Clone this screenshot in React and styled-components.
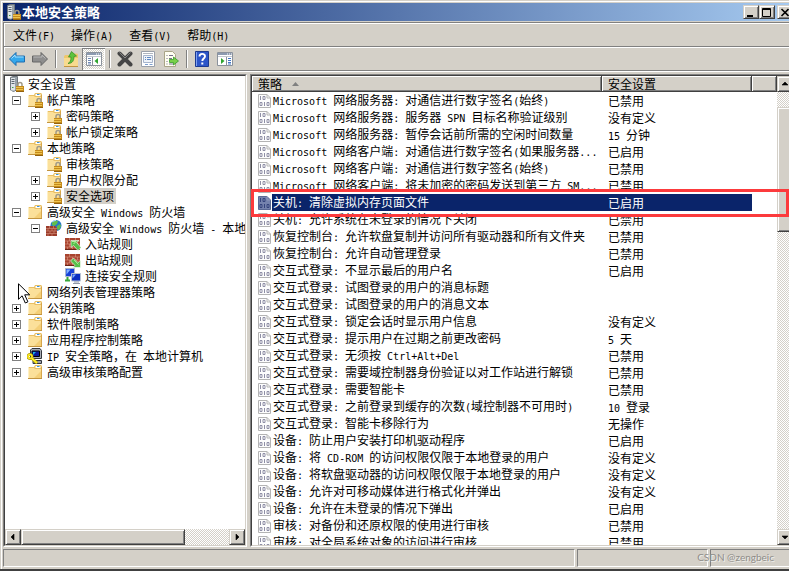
import React from "react";
import styled, { createGlobalStyle, css } from "styled-components";

const face = "#d4d0c8";
const shade = "#808080";
const dark = "#404040";
const navy = "#0a246a";

const Global = createGlobalStyle`
  * { box-sizing: border-box; }
  body { margin: 0; background: ${face}; }
  button { font: inherit; color: inherit; padding: 0; border: 0; background: none; }
`;

const raised = css`
  background: ${face};
  border: 1px solid;
  border-color: ${face} ${dark} ${dark} ${face};
  box-shadow: inset 1px 1px 0 #fff, inset -1px -1px 0 ${shade};
`;

const dither = css`
  background: repeating-conic-gradient(${face} 0% 25%, #fff 0% 50%) 0 0 / 2px 2px;
`;

const Desktop = styled.div`
  position: relative;
  height: 100vh;
  overflow: hidden;
  font: 12px/16px "Noto Sans CJK SC", sans-serif;
  color: #000;
  white-space: pre;
`;

const Window = styled.main`
  display: flex;
  flex-direction: column;
  width: calc(100% + 8px);
  height: 100%;
  padding: 1px 1px 0;
  background: ${face};
  border-bottom: 2px solid ${dark};
`;

const Frame = styled.div`
  flex: 1;
  min-height: 0;
  display: flex;
  flex-direction: column;
  padding: 1px 1px 2px;
  border: 0 solid #fff;
  border-width: 1px 0 0 1px;
`;

const TitleBar = styled.header`
  display: flex;
  align-items: center;
  flex: none;
  height: 18px;
  padding: 0 2px;
  margin-bottom: 1px;
  background: linear-gradient(90deg, ${navy}, #a6caf0);
  color: #fff;
`;

const Title = styled.h1`
  flex: 1;
  margin: 0 0 0 1px;
  font-size: 13px;
  line-height: 18px;
  font-weight: 700;
`;

const CaptionButton = styled.button`
  ${raised}
  width: 16px;
  height: 14px;
  color: #000;
  display: grid;
  place-items: center;
  margin-left: ${(p) => (p.$apart ? "2px" : "0")};
`;

const Strip = styled.div`
  display: flex;
  align-items: center;
  flex: none;
  height: 24px;
  padding-left: 1px;
  border-top: 1px solid ${shade};
  border-left: 1px solid ${shade};
  box-shadow: inset 1px 1px 0 #fff;
`;

const MenuBar = styled(Strip).attrs({ as: "nav" })``;

const ToolBar = styled(Strip)`
  height: 25px;
  border-bottom: 1px solid ${shade};
  box-shadow: inset 1px 1px 0 #fff, 0 1px 0 #fff;
`;

const MenuItem = styled.button`
  padding: 0 8px;
  height: 20px;
`;

const ToolButton = styled.button`
  width: 23px;
  height: 22px;
  display: grid;
  place-items: center;
  ${(p) =>
    p.$pressed &&
    css`
      ${dither}
      box-shadow: inset 1px 1px 0 ${shade}, inset -1px -1px 0 #fff;
    `}
`;

const Separator = styled.span`
  width: 2px;
  height: 18px;
  margin: 0 2px 0 4px;
  border-left: 1px solid ${shade};
  border-right: 1px solid #fff;
`;

const Body = styled.div`
  flex: 1;
  min-height: 0;
  display: grid;
  grid-template-columns: 244px minmax(0, 1fr);
  column-gap: 3px;
  padding-top: 3px;
`;

const Pane = styled.section`
  display: flex;
  min-width: 0;
  min-height: 0;
  overflow: hidden;
  background: #fff;
  border: 1px solid;
  border-color: ${shade} #fff #fff ${shade};
`;

const Sunken = styled.div`
  position: relative;
  flex: 1;
  min-width: 0;
  display: flex;
  flex-direction: ${(p) => (p.$column ? "column" : "row")};
  border: 1px solid;
  border-color: ${dark} ${face} ${face} ${dark};
`;

const Tree = styled.ul`
  flex: 1;
  min-height: 0;
  overflow: hidden;
  list-style: none;
  margin: 0;
  padding: 0 0 0 3px;
`;

const TreeRow = styled.li`
  display: flex;
  align-items: center;
  height: 16px;
  padding-left: ${(p) => Math.max(0, p.$level - 1) * 19}px;
`;

const ExpanderCell = styled.span`
  flex: none;
  width: 19px;
  padding-left: 4px;
  display: flex;
`;

const Expander = styled.button`
  width: 9px;
  height: 9px;
  border: 1px solid ${shade};
  background: #fff;
  display: block;
`;

const TreeLabel = styled.span`
  margin-left: 2px;
  padding: 0 2px;
  background: ${(p) => (p.$selected ? face : "none")};
`;

const ListArea = styled.div`
  flex: 1;
  min-width: 0;
  overflow: hidden;
`;

const Table = styled.table`
  width: 100%;
  table-layout: fixed;
  border-collapse: collapse;
  border-spacing: 0;
`;

const Col = styled.col`
  width: ${(p) => p.$width};
`;

const Th = styled.th`
  height: 16px;
  padding: 0 0 0 6px;
  text-align: left;
  font-weight: 400;
  line-height: 16px;
  background: ${face};
  box-shadow: inset -1px -1px 0 ${dark}, inset 1px 1px 0 #fff, inset -2px -2px 0 ${shade};
`;

const SortMark = styled.svg`
  margin: 0 0 3px 10px;
`;

const Td = styled.td`
  height: 17px;
  padding: 0 0 0 6px;
  line-height: 16px;
  overflow: hidden;
  background: ${(p) => (p.$selected ? navy : "none")};
  color: ${(p) => (p.$selected ? "#fff" : "#000")};
`;

const NameTd = styled(Td)`
  background: none;
`;

const Name = styled.div`
  display: flex;
  align-items: center;
  height: 17px;
`;

const NameText = styled.span`
  flex: 1;
  height: 17px;
  margin-left: 1px;
  padding-left: 1px;
  background: ${(p) => (p.$selected ? navy : "none")};
`;

const ScrollBar = styled.div`
  ${dither}
  flex: none;
  display: flex;
  flex-direction: ${(p) => (p.$vertical ? "column" : "row")};
  ${(p) => (p.$vertical ? "width: 16px;" : "height: 16px;")}
`;

const ScrollButton = styled.button`
  ${raised}
  flex: none;
  width: 16px;
  height: 16px;
  display: grid;
  place-items: center;
`;

const Thumb = styled.div`
  ${raised}
  flex: ${(p) => p.$size} 0 0;
`;

const Gap = styled.div`
  flex: ${(p) => p.$size} 0 0;
`;

const Mark = styled.div`
  position: absolute;
  top: 113px;
  left: -1px;
  right: 4px;
  height: 28px;
  border: 3px solid #fc3a3c;
  pointer-events: none;
`;

const StatusBar = styled.footer`
  flex: none;
  display: flex;
  gap: 2px;
  height: 18px;
  margin-top: 2px;
`;

const StatusCell = styled.div`
  flex: ${(p) => (p.$grow ? "1" : "none")};
  width: ${(p) => p.$width || "auto"};
  border: 1px solid;
  border-color: ${shade} #fff #fff ${shade};
`;

const Pointer = styled.svg`
  position: absolute;
  left: 18px;
  top: 283px;
`;

const Watermark = styled.div`
  position: absolute;
  right: 15px;
  bottom: 6px;
  font: 10px/16px Lato, sans-serif;
  color: #8f8d89;
  text-shadow: 1px 1px 0 #efeeea;
`;

const Latin = styled.span`
  font-family: "DejaVu Sans Mono", monospace;
  font-size: 10px;
  line-height: 10px;
`;

function Text({ children }) {
  return children
    .split(/([\x20-\x7e]+)/)
    .map((part, i) => (i % 2 ? <Latin key={i}>{part}</Latin> : part));
}

const IconSvg = styled.svg`
  flex: none;
  display: block;
`;

const Icon = ({ children, w = 16, h = 16 }) => (
  <IconSvg width={w} height={h} viewBox={`0 0 ${w} ${h}`} aria-hidden="true">
    {children}
  </IconSvg>
);

const Lock = () => (
  <g>
    <path d="M10 10.500V8.500a2 2 0 0 1 4 0v2" fill="none" stroke="#a09a88" strokeWidth="1.500" />
    <rect x="8" y="10" width="8" height="6" fill="#c48a1c" />
    <path d="M8 11.500h7M8 13.500h7" stroke="#eec44e" />
    <path d="M8 15.500h8" stroke="#93620e" />
  </g>
);

const FolderShape = () => (
  <g>
    <path d="M1 4.500 2 3h5l1-2h6l1 1v12H1z" fill="#e9bf62" />
    <path d="M8.500 2h5v2h-5z" fill="#fff" />
    <path d="M10 2.500h2.500" stroke="#3c93dc" />
    <path d="M1 4h6l1 1h6v9H1z" fill="#fbe09a" />
    <path d="M7 14 14 7v7z" fill="#f4cf78" />
    <path d="M1.500 4v10" stroke="#fff0c4" />
    <path d="M1 14.500h14" stroke="#c29440" />
    <path d="M14.500 3v11" stroke="#d6a64c" />
  </g>
);

const ServerShape = () => (
  <g>
    <path d="M2.500 1.500 5 .5h4.500v13l-4 2-3-1.500z" fill="#98a1a8" stroke="#6f777e" />
    <path d="M3 2h4v12.500H3z" fill="#dfe4e8" />
    <path d="M3.500 3.500h3M3.500 5.500h3M3.500 7.500h3" stroke="#5d6770" />
    <path d="M4 11.500h1.500" stroke="#3fa43f" />
  </g>
);

const Bricks = () => (
  <g>
    <path d="M0 2h15v12H0z" fill="#a8442f" />
    <path d="M0 5h15M0 8h15M0 11h15M4.500 2v3M10.500 2v3M2.500 5v3M7.500 5v3M12.500 5v3M4.500 8v3M10.500 8v3M2.500 11v3M7.500 11v3" stroke="#dc9a84" strokeWidth=".6" />
    <path d="M0 13.500h15" stroke="#6b2417" />
  </g>
);

const icons = {
  server: <><ServerShape /><Lock /></>,
  folder: <FolderShape />,
  locked: <><FolderShape /><Lock /></>,
  firewall: (
    <>
      <circle cx="10" cy="5.500" r="5.500" fill="#2878c8" />
      <path d="M6 2.500 9 .5l3 .5-1 3-3 2-2-1zM11 6l3-2 1 2-2 4-2-1z" fill="#62bd4c" />
      <path d="M6 2c1-1 3-1.500 4-1.500" stroke="#b9e6ff" fill="none" />
      <path d="M0 6h9l2 2v8H0z" fill="#9b3b2a" />
      <path d="M0 8.500h11M0 11h11M0 13.500h11M3.500 6v2.500M7.500 6v2.500M2 8.500V11M6 8.500V11M9 8.500V11M4 11v2.500M8 11v2.500M2 13.500V16M6 13.500V16" stroke="#d7937e" strokeWidth=".6" />
    </>
  ),
  inbound: (
    <>
      <Bricks />
      <path d="M6 4.500h8l-2.500 2 4.500 5-3 3-4.500-5-2.500 2z" fill="#56c04a" stroke="#fff" strokeWidth=".6" />
      <path d="M7 5.500h4L8.500 8" fill="none" stroke="#b6f0a0" />
    </>
  ),
  outbound: (
    <>
      <Bricks />
      <path d="M15.500 15.500h-8l2.500-2-4.500-4.500 3-3 4.500 4.500 2.500-2z" fill="#56c04a" stroke="#fff" strokeWidth=".6" />
      <path d="M9 8 13.500 12.500" fill="none" stroke="#a4ea90" />
    </>
  ),
  connection: (
    <>
      <path d="M.5.5h9v8h-9z" fill="#1540d8" stroke="#a9b6cc" />
      <path d="M1.500 1.500h4l-4 5z" fill="#86b4ff" />
      <path d="M6.500 5.500h9v7.500h-9z" fill="#0b2fc0" stroke="#b8c2d4" />
      <path d="M7.500 6.500h3.500l-3.500 4z" fill="#7cabff" />
      <path d="M9 14h5M8 15.500h7" stroke="#8f98a8" />
      <path d="M2.500 9v3M0 12.500h5" stroke="#39a839" strokeWidth="2" />
    </>
  ),
  ipsec: (
    <>
      <path d="M3.500 2 5 .5h8l1.500 2v8H3.500z" fill="#a8acb4" stroke="#33363c" />
      <path d="M5 3h7.500v5.500H5z" fill="#0a1a9c" stroke="#000" />
      <path d="M6 4h3L6 7z" fill="#18b4e8" />
      <path d="M6 12.500h8.500v3H6z" fill="#9ca0a8" stroke="#33363c" />
      <circle cx="3" cy="8.500" r="2.200" fill="none" stroke="#a89000" strokeWidth="2.400" />
      <circle cx="3" cy="8.500" r="2" fill="none" stroke="#ffee22" strokeWidth="1.500" />
      <path d="M4.500 10 10 15" stroke="#a89000" strokeWidth="3" />
      <path d="M4.500 10 10 15" stroke="#ffee22" strokeWidth="1.800" />
    </>
  ),
};

const PolicyIcon = ({ selected }) => (
  <Icon w={13} h={14}>
    <path d="M.5.5h8.500l3.500 3.500v9.500H.5z" fill={selected ? "#7482ad" : "#fdfdfd"} stroke={selected ? "#5a6994" : "#b4b4b4"} />
    <path d="M9 .5V4h3.500" fill="none" stroke={selected ? "#8f9abd" : "#b4b4b4"} />
    <path
      d="M2.500 2v4M5 2.500h2v3H5zM2 8.500h2v3H2zM6.500 8v4M9 8.500h2v3H9z"
      fill="none"
      stroke={selected ? "#35447d" : "#8f8fa6"}
    />
  </Icon>
);

const ArrowIcon = ({ flip, fill, edge, glow }) => (
  <Icon>
    <g transform={flip ? "translate(16 0) scale(-1 1)" : undefined}>
      <path d="M.5 8 7 1.500V5h8.500v6H7v3.500z" fill={fill} stroke={edge} strokeLinejoin="round" />
      <path d="M2.500 7.500 6 4v2h8.500" fill="none" stroke={glow} />
    </g>
  </Icon>
);

const WindowShape = () => (
  <g>
    <path d="M.5 1.500h15v13H.5z" fill="#fff" stroke="#8b929c" />
    <path d="M1 2h14v2H1z" fill="#8c9ab0" />
    <path d="M10 3h1M12 3h1M14 3h1" stroke="#fff" />
    <path d="M1 5.500h14" stroke="#c3c8d0" />
  </g>
);

const UpIcon = () => (
  <Icon>
    <path d="M1 5.500 2 4h5l1-1.500h6l1 1V15H1z" fill="#eec76c" />
    <path d="M1 7h14v8H1z" fill="#f8da8e" />
    <path d="M1 15.500h14" stroke="#c29440" />
    <path d="M5 12.500c2-1 3-3 3-6.500H5.500L8.500.5l5 4.500-2.500.5c0 4-1.500 7-6 7z" fill="#5cc33c" stroke="#2f8a22" strokeWidth=".7" />
  </Icon>
);

const TreePaneIcon = () => (
  <Icon>
    <WindowShape />
    <path d="M6.500 6v8" stroke="#8b929c" />
    <path d="M2 7.500h3M2 9.500h3M2 11.500h3M2 13h3" stroke="#6f88b4" />
    <path d="M12 7v6L8.500 10z" fill="#2fa52f" />
  </Icon>
);

const ActionPaneIcon = () => (
  <Icon>
    <WindowShape />
    <path d="M9.500 6v8" stroke="#8b929c" />
    <path d="M11 7.500h3M11 9.500h3M11 11.500h3M11 13h3" stroke="#3f74c4" />
    <path d="M4 7v6l3.500-3z" fill="#2fa52f" />
  </Icon>
);

const DeleteIcon = () => (
  <Icon>
    <path d="M2.500 2.500 13.500 13.500M13.500 2.500 2.500 13.500" stroke="#454545" strokeWidth="4" strokeLinecap="round" />
    <path d="M2.500 1.500 8 7l5.500-5.500" fill="none" stroke="#858585" />
  </Icon>
);

const PropertiesIcon = () => (
  <Icon>
    <path d="M1.500.5h13v15h-13z" fill="#fff" stroke="#9aa0aa" />
    <path d="M3 2.500h10" stroke="#b0b6c0" />
    <path d="M3.500 4.500h9v7h-9z" fill="#eef3fa" stroke="#a7b5cc" />
    <path d="M5 6.500h1M7 6.500h4M5 8.500h1M7 8.500h4" stroke="#5f89c4" />
    <path d="M5 13.500h3M9.500 13.500h3" stroke="#7c9fd0" />
  </Icon>
);

const ExportIcon = () => (
  <Icon>
    <path d="M1.500.5h8l3 3v12h-11z" fill="#fffef2" stroke="#a9a487" />
    <path d="M3.500 4.500h1M6 4.500h4M3.500 7.500h1M6 7.500h3M3.500 10.500h1M3.500 13h1M6 13h4" stroke="#77728a" />
    <path d="M6.500 8.500h4V6l5 4-5 4v-2.500h-4z" fill="#78d048" stroke="#37992a" strokeWidth=".8" />
  </Icon>
);

const HelpIcon = () => (
  <Icon>
    <path d="M1.500.5h13v15h-13z" fill="#2c55c8" stroke="#1c3a90" />
    <path d="M2.500 1v14" stroke="#7fa0f0" />
    <path d="M5.500 5.500C5.500 2 11 2 11 5.200 11 7.500 8.300 7.500 8.300 10" fill="none" stroke="#fff" strokeWidth="1.900" />
    <path d="M7.300 11.500h2v2h-2z" fill="#fff" />
  </Icon>
);

const glyphs = {
  up: "M4 2 7 5H1z",
  down: "M1 3h6L4 6z",
  left: "M2 4l3-3v6z",
  right: "M6 4 3 1v6z",
};

const Scroll = ({ dir, label }) => (
  <ScrollButton aria-label={label}>
    <svg width="8" height="8" viewBox="0 0 8 8">
      <path d={glyphs[dir]} stroke="#000" strokeWidth=".6" />
    </svg>
  </ScrollButton>
);

const tree = [
  [0, "server", "安全设置"],
  [1, "locked", "帐户策略", "-"],
  [2, "locked", "密码策略", "+"],
  [2, "locked", "帐户锁定策略", "+"],
  [1, "locked", "本地策略", "-"],
  [2, "locked", "审核策略"],
  [2, "locked", "用户权限分配", "+"],
  [2, "locked", "安全选项", "+", true],
  [1, "folder", "高级安全 Windows 防火墙", "-"],
  [2, "firewall", "高级安全 Windows 防火墙 - 本地", "-"],
  [3, "inbound", "入站规则"],
  [3, "outbound", "出站规则"],
  [3, "connection", "连接安全规则"],
  [1, "folder", "网络列表管理器策略"],
  [1, "folder", "公钥策略", "+"],
  [1, "folder", "软件限制策略", "+"],
  [1, "folder", "应用程序控制策略", "+"],
  [1, "ipsec", "IP 安全策略，在 本地计算机", "+"],
  [1, "folder", "高级审核策略配置", "+"],
];

const policies = [
  ["Microsoft 网络服务器: 对通信进行数字签名(始终)", "已禁用"],
  ["Microsoft 网络服务器: 服务器 SPN 目标名称验证级别", "没有定义"],
  ["Microsoft 网络服务器: 暂停会话前所需的空闲时间数量", "15 分钟"],
  ["Microsoft 网络客户端: 对通信进行数字签名(如果服务器...", "已启用"],
  ["Microsoft 网络客户端: 对通信进行数字签名(始终)", "已禁用"],
  ["Microsoft 网络客户端: 将未加密的密码发送到第三方 SM...", "已禁用"],
  ["关机: 清除虚拟内存页面文件", "已启用", true],
  ["关机: 允许系统在未登录的情况下关闭", "已禁用"],
  ["恢复控制台: 允许软盘复制并访问所有驱动器和所有文件夹", "已禁用"],
  ["恢复控制台: 允许自动管理登录", "已禁用"],
  ["交互式登录: 不显示最后的用户名", "已启用"],
  ["交互式登录: 试图登录的用户的消息标题", ""],
  ["交互式登录: 试图登录的用户的消息文本", ""],
  ["交互式登录: 锁定会话时显示用户信息", "没有定义"],
  ["交互式登录: 提示用户在过期之前更改密码", "5 天"],
  ["交互式登录: 无须按 Ctrl+Alt+Del", "已禁用"],
  ["交互式登录: 需要域控制器身份验证以对工作站进行解锁", "已禁用"],
  ["交互式登录: 需要智能卡", "已禁用"],
  ["交互式登录: 之前登录到缓存的次数(域控制器不可用时)", "10 登录"],
  ["交互式登录: 智能卡移除行为", "无操作"],
  ["设备: 防止用户安装打印机驱动程序", "已启用"],
  ["设备: 将 CD-ROM 的访问权限仅限于本地登录的用户", "没有定义"],
  ["设备: 将软盘驱动器的访问权限仅限于本地登录的用户", "没有定义"],
  ["设备: 允许对可移动媒体进行格式化并弹出", "没有定义"],
  ["设备: 允许在未登录的情况下弹出", "已启用"],
  ["审核: 对备份和还原权限的使用进行审核", "已禁用"],
  ["审核: 对全局系统对象的访问进行审核", "已禁用"],
];

export default function App() {
  return (
    <Desktop>
      <Global />
      <Window>
        <Frame>
          <TitleBar>
            <Icon>{icons.server}</Icon>
            <Title>本地安全策略</Title>
            <CaptionButton aria-label="最小化">
              <svg width="10" height="9"><path d="M1 7h6v2H1z" /></svg>
            </CaptionButton>
            <CaptionButton aria-label="最大化">
              <svg width="10" height="9"><path d="M.5.5h8v8h-8zM0 1.500h9" fill="none" stroke="#000" /></svg>
            </CaptionButton>
            <CaptionButton aria-label="关闭" $apart>
              <svg width="10" height="9"><path d="M1.500 1 8.500 8M8.500 1 1.500 8" stroke="#000" strokeWidth="1.600" /></svg>
            </CaptionButton>
          </TitleBar>

          <MenuBar>
            {["文件(F)", "操作(A)", "查看(V)", "帮助(H)"].map((m) => (
              <MenuItem key={m}><Text>{m}</Text></MenuItem>
            ))}
          </MenuBar>

          <ToolBar>
            <ToolButton aria-label="后退"><ArrowIcon fill="#35a8ec" edge="#1c6cb0" glow="#a4e0ff" /></ToolButton>
            <ToolButton aria-label="前进"><ArrowIcon flip fill="#8e8e8e" edge="#666" glow="#b8b8b8" /></ToolButton>
            <Separator />
            <ToolButton aria-label="上一级"><UpIcon /></ToolButton>
            <ToolButton aria-label="显示控制台树" $pressed><TreePaneIcon /></ToolButton>
            <Separator />
            <ToolButton aria-label="删除"><DeleteIcon /></ToolButton>
            <ToolButton aria-label="属性"><PropertiesIcon /></ToolButton>
            <ToolButton aria-label="导出列表"><ExportIcon /></ToolButton>
            <Separator />
            <ToolButton aria-label="帮助"><HelpIcon /></ToolButton>
            <ToolButton aria-label="显示操作窗格"><ActionPaneIcon /></ToolButton>
          </ToolBar>

          <Body>
            <Pane>
              <Sunken $column>
                <Tree>
                  {tree.map(([level, icon, label, sign, selected]) => (
                    <TreeRow key={label} $level={level}>
                      {level > 0 && (
                        <ExpanderCell>
                          {sign && (
                            <Expander aria-label={label} aria-expanded={sign === "-"}>
                              <IconSvg width="7" height="7">
                                <path d={sign === "+" ? "M1 3.500h5M3.500 1v5" : "M1 3.500h5"} stroke="#000" />
                              </IconSvg>
                            </Expander>
                          )}
                        </ExpanderCell>
                      )}
                      <Icon>{icons[icon]}</Icon>
                      <TreeLabel $selected={selected}><Text>{label}</Text></TreeLabel>
                    </TreeRow>
                  ))}
                </Tree>
                <ScrollBar>
                  <Scroll dir="left" label="向左滚动" />
                  <Thumb $size={164} />
                  <Gap $size={44} />
                  <Scroll dir="right" label="向右滚动" />
                </ScrollBar>
              </Sunken>
            </Pane>

            <Pane>
              <Sunken>
                <ListArea>
                  <Table>
                    <colgroup>
                      <Col $width="350px" />
                      <Col $width="150px" />
                      <Col $width="auto" />
                    </colgroup>
                    <thead>
                      <tr>
                        <Th scope="col" aria-sort="ascending">
                          策略
                          <SortMark width="7" height="4"><path d="M3.500 0 7 4H0z" fill={shade} /></SortMark>
                        </Th>
                        <Th scope="col">安全设置</Th>
                        <Th aria-hidden="true" />
                      </tr>
                    </thead>
                    <tbody>
                      {policies.map(([name, value, selected]) => (
                        <tr key={name}>
                          <NameTd $selected={selected}>
                            <Name>
                              <PolicyIcon selected={selected} />
                              <NameText $selected={selected}><Text>{name}</Text></NameText>
                            </Name>
                          </NameTd>
                          <Td $selected={selected}><Text>{value}</Text></Td>
                          <Td />
                        </tr>
                      ))}
                    </tbody>
                  </Table>
                </ListArea>
                <ScrollBar $vertical>
                  <Scroll dir="up" label="向上滚动" />
                  <Gap $size={15} />
                  <Thumb $size={124} />
                  <Gap $size={298} />
                  <Scroll dir="down" label="向下滚动" />
                </ScrollBar>
                <Mark />
              </Sunken>
            </Pane>
          </Body>

          <StatusBar>
            <StatusCell $grow />
            <StatusCell $width="131px" />
            <StatusCell $width="85px" />
          </StatusBar>
        </Frame>
      </Window>
      <Pointer width="13" height="21" viewBox="0 0 13 21" aria-hidden="true">
        <path d="M.5.8v15.500l3.600-3.500 3.200 7.200 2.600-1.200-3.200-7h5z" fill="#fff" stroke="#000" />
      </Pointer>
      <Watermark>CSDN @zengbeic</Watermark>
    </Desktop>
  );
}
